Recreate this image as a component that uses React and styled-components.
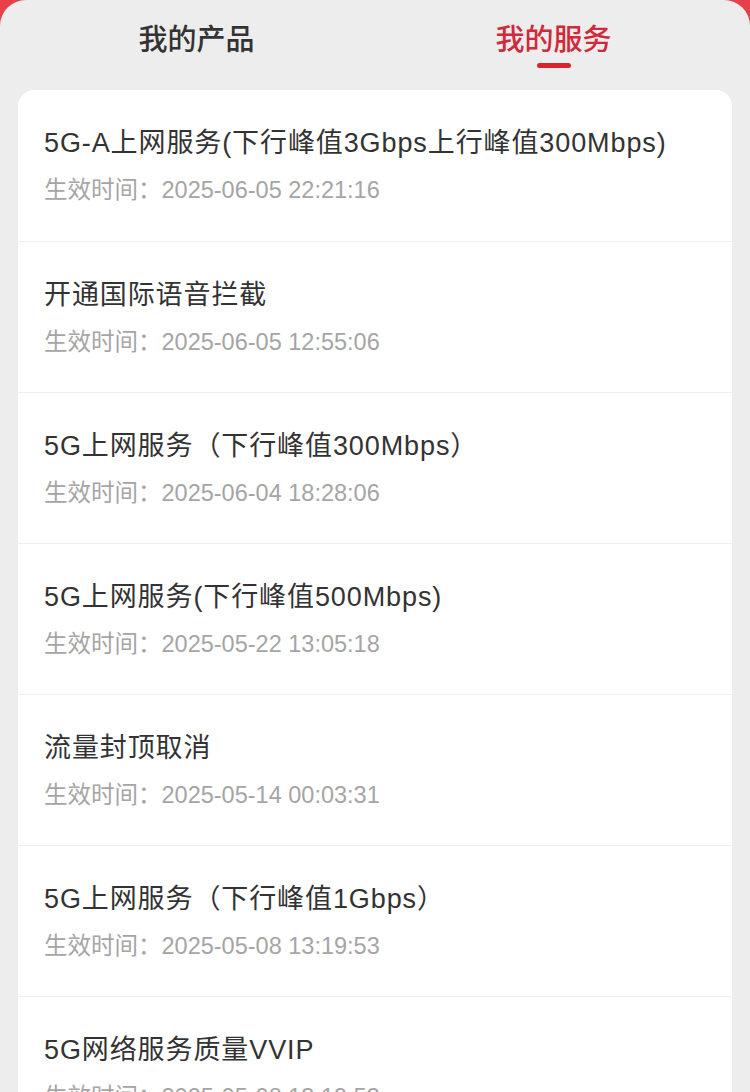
import React, { useState } from 'react';
import styled, { createGlobalStyle } from 'styled-components';

const services = [
  { name: '5G-A上网服务(下行峰值3Gbps上行峰值300Mbps)', time: '2025-06-05 22:21:16' },
  { name: '开通国际语音拦截', time: '2025-06-05 12:55:06' },
  { name: '5G上网服务（下行峰值300Mbps）', time: '2025-06-04 18:28:06' },
  { name: '5G上网服务(下行峰值500Mbps)', time: '2025-05-22 13:05:18' },
  { name: '流量封顶取消', time: '2025-05-14 00:03:31' },
  { name: '5G上网服务（下行峰值1Gbps）', time: '2025-05-08 13:19:53' },
  { name: '5G网络服务质量VVIP', time: '2025-05-08 13:19:53' },
];

const GlobalStyle = createGlobalStyle`
  html, body {
    margin: 0;
    padding: 0;
    background: #e8404a;
    overflow: hidden;
  }
  body {
    font-family: "Liberation Sans", "Noto Sans CJK SC", sans-serif;
  }
`;

const Page = styled.div`
  width: 750px;
  height: 1092px;
  background: #e8404a;
  overflow: hidden;
`;

const Panel = styled.div`
  height: 100%;
  background: #ededed;
  border-radius: 26px 26px 0 0;
  padding: 0 18px;
  box-sizing: border-box;
`;

const Tabs = styled.div`
  display: grid;
  grid-template-columns: 1fr 1fr;
  height: 90px;
`;

const Tab = styled.button`
  border: none;
  background: none;
  padding: 0;
  font-family: "Noto Sans CJK SC", sans-serif;
  display: flex;
  flex-direction: column;
  align-items: center;
  padding-top: 17px;
  gap: 6px;
  cursor: pointer;
  font-size: 29px;
  font-weight: 500;
  line-height: 40px;
  color: ${(p) => (p.$active ? '#d2283a' : '#333333')};

  &::after {
    content: '';
    width: 34px;
    height: 5px;
    border-radius: 3px;
    background: ${(p) => (p.$active ? '#d9232e' : 'transparent')};
  }
`;

const Card = styled.div`
  background: #ffffff;
  border-radius: 16px;
`;

const Row = styled.div`
  height: 151px;
  box-sizing: border-box;
  padding: 34px 26px 0;
  border-top: 1px solid #efefef;

  &:first-child {
    border-top: none;
  }
`;

const Title = styled.div`
  font-size: 27px;
  line-height: 38px;
  letter-spacing: 0.9px;
  color: #333333;
  white-space: nowrap;
`;

const Time = styled.div`
  margin-top: 13px;
  font-size: 23.5px;
  line-height: 30px;
  color: #a5a5a5;
  white-space: nowrap;
`;

export default function App() {
  const [tab, setTab] = useState(1);

  return (
    <Page>
      <GlobalStyle />
      <Panel>
        <Tabs>
          <Tab $active={tab === 0} onClick={() => setTab(0)}>我的产品</Tab>
          <Tab $active={tab === 1} onClick={() => setTab(1)}>我的服务</Tab>
        </Tabs>
        <Card>
          {services.map((s, i) => (
            <Row key={i}>
              <Title>{s.name}</Title>
              <Time>生效时间：{s.time}</Time>
            </Row>
          ))}
        </Card>
      </Panel>
    </Page>
  );
}
